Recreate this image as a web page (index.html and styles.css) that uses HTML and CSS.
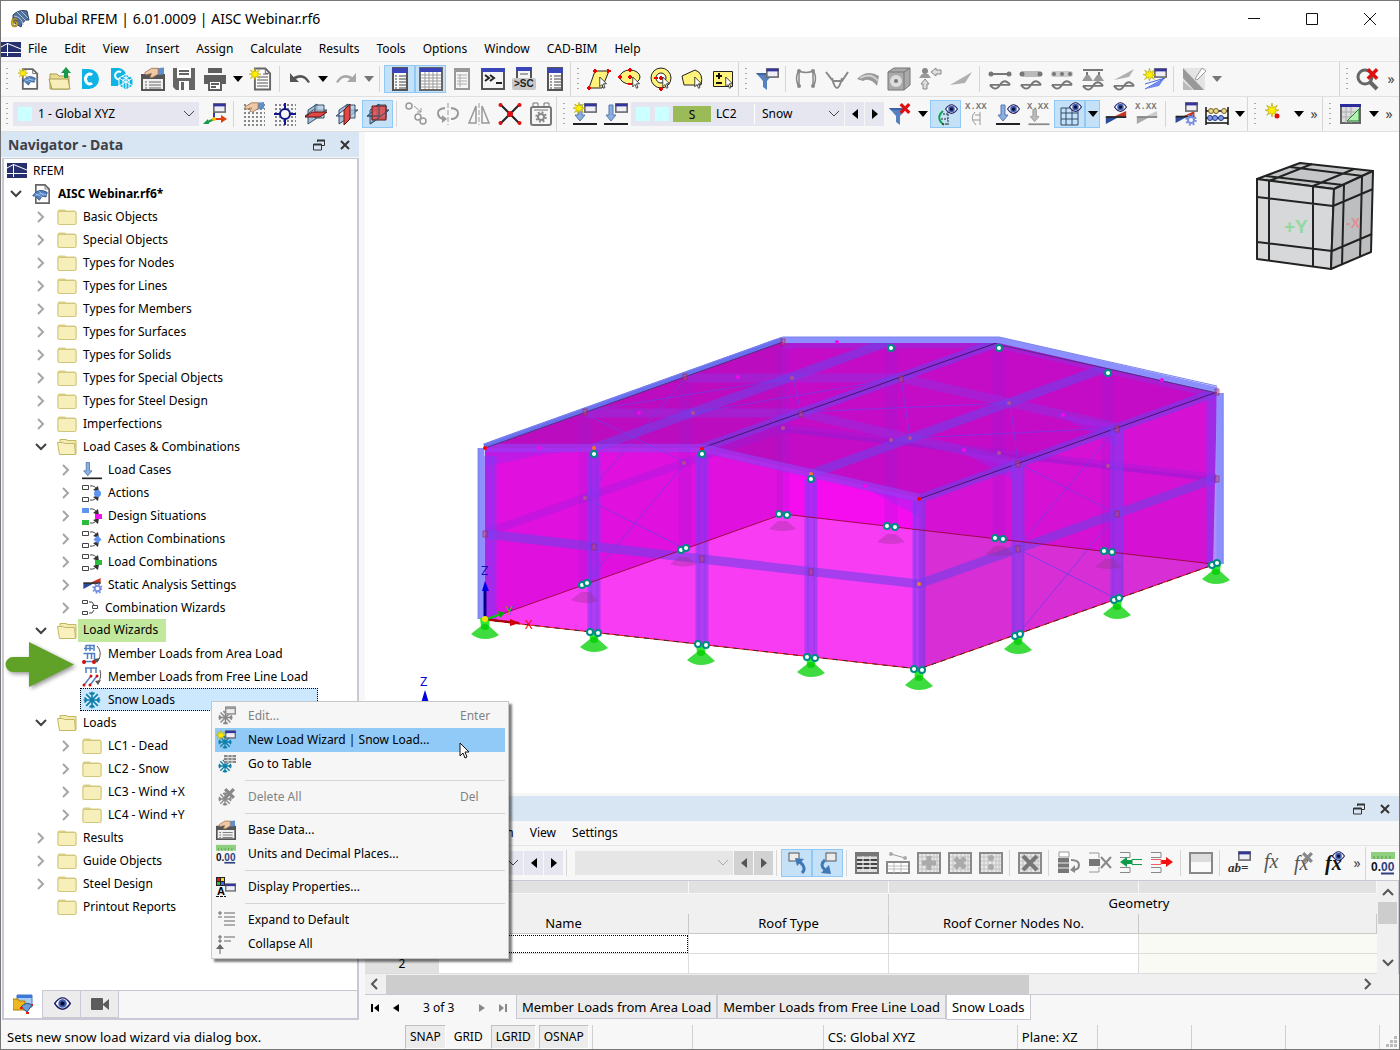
FILE: index.html
```html
<!DOCTYPE html>
<html lang="en">
<head>
<meta charset="utf-8">
<title>Dlubal RFEM | 6.01.0009 | AISC Webinar.rf6</title>
<link rel="stylesheet" href="styles.css">
</head>
<body>
<svg class="sprite" aria-hidden="true">
  <defs>
    <linearGradient id="g-grid" x1="0" y1="0" x2="1" y2="1"><stop offset="0" stop-color="#b8dcf4"/><stop offset="1" stop-color="#4a7194"/></linearGradient>
  </defs>
  <!-- shared motifs -->
  <symbol id="star" viewBox="0 0 24 24"><path d="M12 0l2 8 7-4-4 7 7 1-7 3 4 6-7-4-2 7-2-7-7 4 4-6-7-3 7-1-4-7 7 4z" fill="#ffee00" stroke="#a89a00"/></symbol>
  <symbol id="win" viewBox="0 0 24 18"><rect x="1.500" y="1.500" width="21" height="15" fill="#eeeef4" stroke="#6a6a70" stroke-width="3"/><rect x="1" y="1" width="22" height="5" fill="#34349c"/></symbol>
  <symbol id="win-g" viewBox="0 0 24 18"><rect x="1.500" y="1.500" width="21" height="15" fill="#eee" stroke="#8a8a8a" stroke-width="3"/><rect x="1" y="1" width="22" height="5" fill="#999"/></symbol>
  <symbol id="eye" viewBox="0 0 24 18"><path d="M1 9Q12-7 23 9 12 25 1 9z" fill="#fff" stroke="#1c1c60" stroke-width="2"/><circle cx="12" cy="9" r="6" fill="#3c5cae"/><circle cx="12" cy="9" r="3" fill="#0a0a30"/></symbol>
  <symbol id="flake" viewBox="0 0 24 24"><path d="M12 2v20M2 12h20M5 5l14 14M19 5L5 19M9 3l3 3 3-3M9 21l3-3 3 3M3 9l3 3-3 3M21 9l-3 3 3 3" fill="none" stroke="currentColor" stroke-width="2"/></symbol>
  <symbol id="gear" viewBox="0 0 24 24"><g fill="none" stroke="currentColor"><circle cx="12" cy="12" r="9.500" stroke-width="4" stroke-dasharray="3.730 3.730"/><circle cx="12" cy="12" r="6" stroke-width="4"/></g></symbol>
  <symbol id="cross" viewBox="0 0 24 24"><path d="M4 4l16 16M20 4L4 20" stroke="currentColor" stroke-width="6"/></symbol>
  <symbol id="cur" viewBox="0 0 12 18"><path d="M1 1v13l3-3 2 5 2-1-2-5h4z" fill="#fff" stroke="#111"/></symbol>
  <symbol id="chev-r" viewBox="0 0 12 12"><path d="M3 1l5 5-5 5" fill="none" stroke="#a6a6a6" stroke-width="2"/></symbol>
  <symbol id="chev-d" viewBox="0 0 12 12"><path d="M1 3l5 5 5-5" fill="none" stroke="#404040" stroke-width="2"/></symbol>
  <symbol id="chev-s" viewBox="0 0 12 12"><path d="M1 3l5 5 5-5" fill="none" stroke="currentColor"/></symbol>
  <symbol id="folder" viewBox="0 0 20 18"><path d="M.5 3.500q0-2 2-2h5l2 1h8q2 0 2 2v10.500q0 2-2 2h-15q-2 0-2-2z" fill="#d9cf85"/><rect x="1" y="3.500" width="18" height="13" rx="1.500" fill="#f7efb9" stroke="#d2c67c"/></symbol>
  <symbol id="folder-open" viewBox="0 0 20 18"><path d="M3 4V1.500h6l2 1h8V16" fill="#f3eab0" stroke="#c4b762"/><path d="M.5 4.500h5l2 1h10l1 11h-16z" fill="#f8f0bd" stroke="#c4b762"/></symbol>
  <symbol id="brand" viewBox="0 0 20 15"><rect width="20" height="15" fill="#27306e"/><path d="M0 10.500h20M6.500 1v13M0 5l6.500-3.500L20 7" fill="none" stroke="#fff" stroke-width="1"/></symbol>
  <symbol id="down-load" viewBox="0 0 24 24"><path d="M5 3h4v10h3l-5 6-5-6h3z" fill="#8aaee0" stroke="#5478b0"/><path d="M0 22h24" stroke="#222" stroke-width="2"/></symbol>
  <symbol id="down-load-g" viewBox="0 0 24 24"><path d="M5 5h4v8h3l-5 6-5-6h3z" fill="#bbb" stroke="#999"/><path d="M0 22h24" stroke="#888" stroke-width="2"/></symbol>
  <symbol id="grid-g" viewBox="0 0 24 24"><rect x="1" y="2" width="22" height="20" fill="#e8e8e8" stroke="#8a8a8a" stroke-width="2"/><path d="M2 6h20M2 10h20M2 14h20M2 18h20M5 3v18M9 3v18M13 3v18M17 3v18M20 3v18" stroke="#c2c2c2" fill="none"/></symbol>
  <symbol id="dots" viewBox="0 0 24 24"><path d="M2 3h21M2 7h21M2 11h21M2 15h21M2 19h21M2 23h21" stroke="#888" stroke-width="2" stroke-dasharray="2 2"/></symbol>
  <symbol id="planes" viewBox="0 0 24 24"><path d="M4 8l9-6v14l-9 6zM1 14h14l8-6H9z" fill="#8fb0d0" fill-opacity=".8" stroke="#37506a"/><path d="M11 3h9v13h-9z" fill="#a8c4dd" fill-opacity=".7" stroke="#37506a"/></symbol>
  <symbol id="comb" viewBox="0 0 20 20"><path d="M.5 2.500h6v4h-6zM.5 14.500h6v4h-6z" fill="#fff" stroke="#444"/><path d="M8 3q5-1 7 4M8 17q5 1 7-4" fill="none" stroke="#444"/><path d="M11 7l6 2-1-6zM11 14l6-2-1 6z" fill="#333"/></symbol>
  <symbol id="wedge" viewBox="0 0 24 14"><path d="M1 7v7l13-7z" fill="#2c4a9c"/><path d="M10 6L23 0v6z" fill="#c83420"/><path d="M1 6.500h22" stroke="#222" stroke-width="2"/></symbol>
  <symbol id="wedge-g" viewBox="0 0 24 14"><path d="M1 7v7l13-7z" fill="#aaa"/><path d="M10 6L23 0v6z" fill="#ccc"/><path d="M1 6.500h22" stroke="#888" stroke-width="2"/></symbol>
  <symbol id="hand" viewBox="0 0 24 12"><path d="M16 1l8-1v8l-7 1z" fill="#5e8fd0"/><path d="M1 6l8-5h8v7l-7 4H7l2-5-7 2z" fill="#eec9a4" stroke="#9a7150"/></symbol>
  <symbol id="basedata" viewBox="0 0 24 24"><rect x="1" y="8" width="22" height="15" fill="#f0f0f0" stroke="#555" stroke-width="2"/><path d="M1 7h22v5H1z" fill="#555"/><path d="M4 15h2M8 15h12M4 18h2M8 18h12M4 21h2M8 21h12" stroke="#666"/><use href="#hand" x="3" y="0" width="20" height="11"/></symbol>
  <symbol id="units" viewBox="0 0 24 24"><path d="M0 1h24v7H0z" fill="#8ed07e"/><path d="M3 5v3M7 5v3M11 5v3M15 5v3M19 5v3" stroke="#5a9a4c"/><text x="0" y="20" font-family="Liberation Sans" font-size="12" font-weight="700" fill="#111">0.<tspan fill="#2e4080">00</tspan></text><path d="M10 22.500h13" stroke="#2e4080" stroke-width="2"/></symbol>
  <symbol id="doc" viewBox="0 0 20 24"><path d="M2 1h11l5 5v17H2z" fill="#fdfdfd" stroke="#666" stroke-width="2"/><path d="M13 1v5h5" fill="none" stroke="#666"/></symbol>
  <symbol id="dome" viewBox="0 0 24 18"><path d="M1 10Q10-3 23 5l-2 7-6-1-4 6-5-5z" fill="#4f7fc0" stroke="#23426e"/><path d="M5 7l10 5M10 3l8 7M3 12q7-8 19-3" fill="none" stroke="#bcd6f2"/></symbol>
  <symbol id="funnel" viewBox="0 0 24 24"><path d="M1 6h18l-7 8v9l-4-3v-6z" fill="#5681be"/><path d="M1 6h18l-1.500 2H3z" fill="#3c64a0"/></symbol>
  <symbol id="restore" viewBox="0 0 12 12"><path d="M4.500 3V1.500h7v5H9" fill="none" stroke="#333"/><path d="M4 1.500h8M.5 5.500h8" stroke="#333" stroke-width="2"/><path d="M.5 5v6h8V5" fill="none" stroke="#333"/></symbol>
  <symbol id="close" viewBox="0 0 12 12"><path d="M2 2l8 8M10 2l-8 8" stroke="#333" stroke-width="2"/></symbol>
  <symbol id="listwin" viewBox="0 0 24 24"><rect x="5" y="1" width="14" height="22" fill="#fafafa" stroke="#555" stroke-width="2"/><path d="M4 1h16v5H4z" fill="#3a46b8"/><path d="M7 9h2M7 12h2M7 15h2M7 18h2M7 21h2M11 9h7M11 12h7M11 15h7M11 18h7M11 21h7" stroke="#444"/></symbol>
  <symbol id="wave" viewBox="0 0 24 12"><path d="M1 7h22M1 7q6 8 11 0t11 0" fill="none" stroke="#777" stroke-width="2"/></symbol>
</svg>

<header class="titlebar">
  <svg class="app-icon" viewBox="0 0 22 22"><path d="M4 7Q10 1 18 3l2 9q-6-1-8 7L4 14z" fill="#54719c" stroke="#2c4060"/><path d="M8 4l9 9M12 3l7 7M5 8q8 1 9 9" fill="none" stroke="#a9c2e0"/><text x="2" y="19" font-family="Liberation Sans" font-size="13" font-weight="700" fill="#f0c02c" stroke="#5d4a08" stroke-width=".5">6</text></svg>
  <h1>Dlubal RFEM | 6.01.0009 | AISC Webinar.rf6</h1>
  <div class="win-btns">
    <button type="button" aria-label="Minimize"><svg viewBox="0 0 14 14"><path d="M1 6.500h12" stroke="#111"/></svg></button>
    <button type="button" aria-label="Maximize"><svg viewBox="0 0 14 14"><path d="M1.500 1.500h11v11h-11z" fill="none" stroke="#111"/></svg></button>
    <button type="button" aria-label="Close"><svg viewBox="0 0 14 14"><path d="M1 1l12 12M13 1L1 13" stroke="#111"/></svg></button>
  </div>
</header>

<nav class="menubar" aria-label="Main menu">
  <svg class="brand"><use href="#brand"/></svg>
  <button type="button">File</button><button type="button">Edit</button><button type="button">View</button><button type="button">Insert</button><button type="button">Assign</button><button type="button">Calculate</button><button type="button">Results</button><button type="button">Tools</button><button type="button">Options</button><button type="button">Window</button><button type="button">CAD-BIM</button><button type="button">Help</button>
</nav>

<div class="toolbar" role="toolbar" aria-label="Standard">
  <i class="grip"></i>
  <button class="tb" type="button" aria-label="New"><svg viewBox="0 0 24 24"><use href="#doc" x="4" y="1" width="18" height="22"/><use href="#dome" x="5" y="8" width="14" height="11"/><use href="#star" x="1" y="1" width="10" height="10"/></svg></button>
  <button class="tb" type="button" aria-label="Open"><svg viewBox="0 0 24 24"><path d="M2 22V7h7l2 2h10v13z" fill="#e9dc95" stroke="#a89c50"/><path d="M1 12h19l2 10H4z" fill="#f8efb8" stroke="#a89c50"/><path d="M16 11V6h-3l5-6 5 6h-3v5z" fill="#159a4c"/></svg></button>
  <button class="tb" type="button" aria-label="Cloud"><svg viewBox="0 0 24 24"><path d="M3 2h7a10 10 0 0 1 0 20H3z" fill="#10b4e4"/><path d="M13 8a4 5 0 1 0 0 8" fill="none" stroke="#fff" stroke-width="3"/></svg></button>
  <button class="tb" type="button" aria-label="Cloud model"><svg viewBox="0 0 24 24"><path d="M1 1h8a9 9 0 0 1 7 6l-8 12H1z" fill="#10b4e4"/><path d="M11 5a4 4 0 1 0 0 7" fill="none" stroke="#fff" stroke-width="2"/><path d="M16 7l7 4v8l-7 4-7-4v-8z" fill="#10b4e4" stroke="#fff"/><path d="M16 7v8l7 4M9 11l7 4-7 4M16 15l7-4M16 15v8M12 9l7 4v8M20 9l-7 4v8" fill="none" stroke="#fff"/></svg></button>
  <button class="tb" type="button" aria-label="Base data"><svg><use href="#basedata"/></svg></button>
  <button class="tb" type="button" aria-label="Save"><svg viewBox="0 0 24 24"><path d="M1 1h22v22H4l-3-3z" fill="#666"/><path d="M5 1h14v10H5z" fill="#fff"/><path d="M7 4h10M7 7h10" stroke="#666" stroke-width="2"/><path d="M7 14h10v9H7z" fill="#fff"/><path d="M9 15h3v8H9z" fill="#666"/></svg></button>
  <button class="tb" type="button" aria-label="Print"><svg viewBox="0 0 24 24"><path d="M5 1h14v5H5zM1 8h22v9h-4v-4H5v4H1z" fill="#5e5e5e"/><path d="M6 14h12v9H6z" fill="#fff" stroke="#5e5e5e" stroke-width="2"/><path d="M8 17h8M8 20h5" stroke="#5e5e5e" stroke-width="2"/></svg></button>
  <button class="dd" type="button" aria-label="Print options"><svg viewBox="0 0 10 6"><path d="M0 0h10L5 6z"/></svg></button>
  <button class="tb" type="button" aria-label="New report"><svg viewBox="0 0 24 24"><use href="#doc" x="4" y="0" width="19" height="24"/><path d="M8 10h11M8 13h11M8 16h11M8 19h11M14 7h5" stroke="#555"/><use href="#star" x="0" y="1" width="12" height="12"/></svg></button>
  <i class="sep"></i>
  <button class="tb" type="button" aria-label="Undo"><svg viewBox="0 0 24 24"><path d="M2 6v9h9L8 12q7-4 12 4l2-1Q16 4 5.500 10z" fill="#555"/></svg></button>
  <button class="dd" type="button" aria-label="Undo list"><svg viewBox="0 0 10 6"><path d="M0 0h10L5 6z"/></svg></button>
  <button class="tb" type="button" aria-label="Redo"><svg viewBox="0 0 24 24"><path d="M22 6v9h-9l3-3q-7-4-12 4l-2-1Q8 4 18.500 10z" fill="#a8a8a8"/></svg></button>
  <button class="dd" type="button" aria-label="Redo list"><svg viewBox="0 0 10 6"><path d="M0 0h10L5 6z" fill="#777"/></svg></button>
  <i class="sep"></i>
  <button class="tb on" type="button" aria-label="Navigator"><svg><use href="#listwin"/></svg></button>
  <button class="tb on" type="button" aria-label="Tables"><svg viewBox="0 0 24 24"><rect x="1" y="1" width="22" height="22" fill="#fff" stroke="#666" stroke-width="2"/><path d="M1 1h22v4H1z" fill="#3a46b8"/><path d="M2 8h20M2 11h20M2 14h20M2 17h20M2 20h20M6 5v17M10 5v17M14 5v17M18 5v17" stroke="#999"/></svg></button>
  <button class="tb" type="button" aria-label="Sheet"><svg viewBox="0 0 24 24"><rect x="5" y="2" width="14" height="20" fill="#f6f6f6" stroke="#999" stroke-width="2"/><path d="M5 1h14v4H5z" fill="#999"/><path d="M7 8h10M7 11h10M7 14h10M7 17h10M10 7v13" stroke="#aaa"/></svg></button>
  <button class="tb" type="button" aria-label="Console"><svg viewBox="0 0 24 24"><rect x="1" y="2" width="22" height="20" fill="#f4f4f4" stroke="#555" stroke-width="2"/><path d="M0 1h24v4H0z" fill="#3a46b8"/><path d="M4 8l4 3-4 3M9 8l4 3-4 3M15 16h6" fill="none" stroke="#222" stroke-width="2"/></svg></button>
  <button class="tb" type="button" aria-label="Script"><svg viewBox="0 0 24 24"><path d="M5 1h14v11H5z" fill="#f4f4f4" stroke="#555" stroke-width="2"/><path d="M4 0h16v4H4z" fill="#3a46b8"/><path d="M8 7h8" stroke="#555"/><rect x="0" y="11" width="24" height="12" rx="2" fill="#c8c8c8"/><text x="2" y="20" font-family="Liberation Sans" font-size="10" font-weight="700" fill="#222">&gt;SC</text></svg></button>
  <button class="tb" type="button" aria-label="Panel"><svg><use href="#listwin"/></svg></button>
  <i class="sep-grip"></i>
  <button class="tb" type="button" aria-label="Select by rhomboid"><svg viewBox="0 0 24 24"><path d="M2 21l6-17h14l-7 17z" fill="#fff27a" stroke="#222"/><path d="M6 4h4M20 4h4M0 21h4M8 2v4M21 2v4M2 19v4" stroke="#e00" stroke-width="2"/><use href="#cur" x="12" y="9" width="9" height="14"/></svg></button>
  <button class="tb" type="button" aria-label="Select by ellipse"><svg viewBox="0 0 24 24"><ellipse cx="12" cy="10" rx="10" ry="7" fill="#fff27a" stroke="#222"/><path d="M0 10h4M10 10h4M10 3h4M12 1v4M12 8v4M2 8v4M10 17h4" stroke="#e00" stroke-width="2"/><use href="#cur" x="14" y="9" width="9" height="14"/></svg></button>
  <button class="tb" type="button" aria-label="Select by ring"><svg viewBox="0 0 24 24"><circle cx="12" cy="11" r="10" fill="#fff27a" stroke="#222"/><circle cx="12" cy="11" r="5" fill="#fff" stroke="#222"/><path d="M5 11h4M10 11h4M12 9v4M12 20v4M10 22h4" stroke="#e00" stroke-width="2"/><use href="#cur" x="13" y="9" width="9" height="14"/></svg></button>
  <button class="tb" type="button" aria-label="Select by polygon"><svg viewBox="0 0 24 24"><path d="M2 9L15 3q9 3 6 15L4 18z" fill="#fff27a" stroke="#222"/><use href="#cur" x="14" y="9" width="9" height="14"/></svg></button>
  <button class="tb" type="button" aria-label="Select plus minus"><svg viewBox="0 0 24 24"><path d="M2.500 4.500h19v15h-19z" fill="#fff27a" stroke="#222"/><path d="M5 9h6M8 6v6M5 16h6" stroke="#111" stroke-width="2"/><use href="#cur" x="14" y="9" width="9" height="14"/></svg></button>
  <i class="sep-grip"></i>
  <button class="tb" type="button" aria-label="Filter settings"><svg viewBox="0 0 24 24"><use href="#funnel"/><use href="#win" x="11" y="1" width="13" height="10"/></svg></button>
  <i class="sep"></i>
  <button class="tb" type="button" aria-label="Frame"><svg viewBox="0 0 24 24"><path d="M5 3v17M19 3v17M5 4q7 3 14 0M4 5q-3 6 0 13M20 5q3 6 0 13" fill="none" stroke="#888" stroke-width="1.500"/><g fill="#888"><circle cx="5" cy="4" r="2"/><circle cx="19" cy="4" r="2"/><circle cx="5" cy="19" r="2"/><circle cx="19" cy="19" r="2"/></g></svg></button>
  <button class="tb" type="button" aria-label="Moments"><svg viewBox="0 0 24 24"><path d="M1 5l7 9h9l6-9M7 11q5 20 10 0" fill="none" stroke="#888" stroke-width="2"/></svg></button>
  <button class="tb" type="button" aria-label="Surface results"><svg viewBox="0 0 24 24"><path d="M1 12Q11 2 23 9l-2 10Q14 10 7 14z" fill="#999"/><path d="M4 11q11-6 18 3" fill="none" stroke="#ccc" stroke-width="2"/></svg></button>
  <button class="tb" type="button" aria-label="Solid results"><svg viewBox="0 0 24 24"><path d="M1 5l6-4h16v17l-6 5H1z" fill="#aaa" stroke="#777"/><path d="M1 5h16v18M17 5l6-4" fill="none" stroke="#777"/><circle cx="9" cy="14" r="6" fill="#ddd"/><circle cx="9" cy="14" r="2" fill="#777"/></svg></button>
  <button class="tb" type="button" aria-label="Support reactions"><svg viewBox="0 0 24 24"><circle cx="7" cy="4" r="3" fill="#888"/><path d="M1 11l3-4h6l3 4z" fill="#999"/><path d="M5 22v-5H3l4-5 4 5H9v5zM23 3h-5V1l-5 4 5 4V7h5z" fill="#ddd" stroke="#888"/></svg></button>
  <button class="tb" type="button" aria-label="Contact"><svg viewBox="0 0 24 24"><path d="M1 18L23 5l-7 11z" fill="#b0b0b0"/></svg></button>
  <i class="sep"></i>
  <button class="tb" type="button" aria-label="Member"><svg viewBox="0 0 24 24"><path d="M2 7h20" stroke="#777" stroke-width="2"/><circle cx="3" cy="7" r="2.500" fill="#777"/><circle cx="21" cy="7" r="2.500" fill="#777"/><use href="#wave" x="1" y="11" width="22" height="12"/></svg></button>
  <button class="tb" type="button" aria-label="Member set"><svg viewBox="0 0 24 24"><rect x="2" y="4" width="20" height="6" rx="3" fill="#bbb"/><circle cx="3" cy="7" r="2.500" fill="#777"/><circle cx="21" cy="7" r="2.500" fill="#777"/><use href="#wave" x="1" y="11" width="22" height="12"/></svg></button>
  <button class="tb" type="button" aria-label="Member joints"><svg viewBox="0 0 24 24"><rect x="1" y="4" width="22" height="6" rx="3" fill="#ccc"/><g fill="#777"><circle cx="4" cy="7" r="2"/><circle cx="12" cy="7" r="2"/><circle cx="20" cy="7" r="2"/></g><use href="#wave" x="1" y="11" width="22" height="12"/></svg></button>
  <button class="tb" type="button" aria-label="Supports"><svg viewBox="0 0 24 24"><path d="M2 3h20M6 5v6M18 5v6" stroke="#777" stroke-width="2"/><path d="M1 14l4-6h3l4 6 4-6h3l4 6z" fill="#999"/><use href="#wave" x="1" y="12" width="22" height="12"/></svg></button>
  <button class="tb" type="button" aria-label="Line result"><svg viewBox="0 0 24 24"><path d="M2 13L22 2l-5 8z" fill="#b0b0b0"/><use href="#wave" x="1" y="12" width="22" height="12"/></svg></button>
  <button class="tb" type="button" aria-label="New result"><svg viewBox="0 0 24 24"><path d="M3 22l18-10-5 7z" fill="#6c88f4"/><path d="M2 17l20-6M2 22l20-11" stroke="#4664e0"/><use href="#win" x="11" y="1" width="13" height="10"/><use href="#star" x="0" y="1" width="13" height="13"/></svg></button>
  <i class="sep"></i>
  <button class="tb" type="button" aria-label="Edit result"><svg viewBox="0 0 24 24"><path d="M1 1h22v22H1z" fill="#e4e4e4"/><path d="M1 1l21 22H12L1 11z" fill="#999"/><path d="M1 23V14l10 9z" fill="#bbb"/><path d="M13 12L20 1l4 3-9 9z" fill="#fff" stroke="#999"/></svg></button>
  <button class="dd" type="button" aria-label="Result options"><svg viewBox="0 0 10 6"><path d="M0 0h10L5 6z" fill="#777"/></svg></button>
  <span class="grow"></span>
  <i class="sep-grip"></i>
  <button class="tb" type="button" aria-label="Cancel zoom"><svg viewBox="0 0 24 24" class="red"><circle cx="9" cy="10" r="7" fill="none" stroke="#666" stroke-width="3"/><path d="M14 15l7 7" stroke="#666" stroke-width="4"/><use href="#cross" x="9" y="0" width="15" height="14"/></svg></button>
  <button class="more" type="button">»</button>
</div>

<div class="toolbar" role="toolbar" aria-label="Load cases">
  <i class="grip"></i>
  <label class="combo combo-cs"><i class="swatch"></i><select aria-label="Coordinate system"><option>1 - Global XYZ</option></select><svg class="chev"><use href="#chev-s"/></svg></label>
  <button class="tb" type="button" aria-label="Edit axes"><svg viewBox="0 0 24 24"><path d="M11 17V3" stroke="#2c3ca8" stroke-width="2"/><path d="M11 17l-8 4" stroke="#159a4c" stroke-width="2"/><path d="M0 22l5-5 1 5z" fill="#159a4c"/><path d="M11 17h9" stroke="#e04010" stroke-width="2"/><path d="M18 13l6 4-6 4z" fill="#e04010"/><circle cx="11" cy="17" r="2" fill="#f6c000"/><use href="#win" x="10" y="1" width="13" height="10"/></svg></button>
  <i class="sep"></i>
  <button class="tb" type="button" aria-label="Grid settings"><svg viewBox="0 0 24 24"><use href="#dots"/><use href="#hand" x="2" y="0" width="20" height="10"/></svg></button>
  <button class="tb" type="button" aria-label="Snap"><svg viewBox="0 0 24 24"><use href="#dots"/><circle cx="12" cy="12" r="5" fill="#f7f7f7" stroke="#10188c" stroke-width="2"/><path d="M12 1v6M12 17v6M1 12h6M17 12h6" stroke="#10188c" stroke-width="2"/></svg></button>
  <button class="tb" type="button" aria-label="Plane XY"><svg viewBox="0 0 24 24"><use href="#planes"/><path d="M1 15l7-5h15l-7 5z" fill="#e04848" stroke="#601010"/></svg></button>
  <button class="tb" type="button" aria-label="Plane YZ"><svg viewBox="0 0 24 24"><use href="#planes"/><path d="M9 8l6-6v15l-6 6z" fill="#e04848" stroke="#601010"/></svg></button>
  <button class="tb on" type="button" aria-label="Plane XZ"><svg viewBox="0 0 24 24"><use href="#planes"/><path d="M6 4h14v14H6z" fill="#e04848" fill-opacity=".85" stroke="#601010"/><path d="M1 14h14l8-6M13 2v14l-9 6" fill="none" stroke="#37506a"/></svg></button>
  <i class="sep"></i>
  <button class="tb" type="button" aria-label="Copy"><svg viewBox="0 0 24 24"><g fill="none" stroke="#999" stroke-width="1.500"><circle cx="4" cy="4" r="3"/><circle cx="13" cy="15" r="3"/><circle cx="18" cy="19" r="3"/></g><path d="M9 4l7 6M16 6v4h-4" stroke="#999" fill="none"/></svg></button>
  <button class="tb" type="button" aria-label="Rotate"><svg viewBox="0 0 24 24"><path d="M12 1v22" stroke="#999" stroke-dasharray="5 2"/><path d="M9 6Q1 7 2 12t7 5M15 6q8 1 7 6t-7 5" fill="none" stroke="#999" stroke-width="2"/><path d="M6 13l5 4-5 4z" fill="#999"/></svg></button>
  <button class="tb" type="button" aria-label="Mirror"><svg viewBox="0 0 24 24"><path d="M12 1v22" stroke="#999" stroke-dasharray="5 2"/><path d="M9 4v17H2zM15 4v17h7z" fill="none" stroke="#999" stroke-width="1.500"/></svg></button>
  <button class="tb" type="button" aria-label="Divide"><svg viewBox="0 0 24 24"><path d="M2 2l20 20M22 2L2 22" stroke="#222" stroke-width="2"/><g fill="#e01010"><circle cx="2.500" cy="3" r="2"/><circle cx="21.500" cy="3" r="2"/><circle cx="2.500" cy="21" r="2"/><circle cx="21.500" cy="21" r="2"/><circle cx="12" cy="12" r="3"/></g></svg></button>
  <button class="tb" type="button" aria-label="Recorder"><svg viewBox="0 0 24 24" class="gray"><rect x="2" y="5" width="20" height="18" rx="2" fill="none" stroke="#777" stroke-width="2"/><path d="M4 4V1h5v3M15 4V1h5v3M5 8h14" fill="none" stroke="#777"/><use href="#gear" x="6" y="9" width="12" height="12"/></svg></button>
  <i class="sep-grip"></i>
  <button class="tb" type="button" aria-label="New load case"><svg viewBox="0 0 24 24"><use href="#down-load"/><use href="#win" x="11" y="1" width="13" height="10"/><use href="#star" x="0" y="0" width="12" height="12"/></svg></button>
  <button class="tb" type="button" aria-label="Edit load case"><svg viewBox="0 0 24 24"><use href="#down-load"/><use href="#win" x="11" y="1" width="13" height="10"/></svg></button>
  <label class="combo combo-lc"><i class="swatch"></i><i class="swatch"></i><span class="tag">S</span><span class="lc">LC2</span><select aria-label="Load case"><option>Snow</option></select><svg class="chev"><use href="#chev-s"/></svg></label>
  <button class="step" type="button" aria-label="Previous"><svg viewBox="0 0 6 10"><path d="M6 0v10L0 5z"/></svg></button>
  <button class="step" type="button" aria-label="Next"><svg viewBox="0 0 6 10"><path d="M0 0v10l6-5z"/></svg></button>
  <button class="tb" type="button" aria-label="Clear filter"><svg viewBox="0 0 24 24" class="red"><use href="#funnel"/><use href="#cross" x="10" y="0" width="14" height="13"/></svg></button>
  <button class="dd" type="button" aria-label="Filter list"><svg viewBox="0 0 10 6"><path d="M0 0h10L5 6z"/></svg></button>
  <button class="tb on" type="button" aria-label="Show results"><svg viewBox="0 0 24 24"><path d="M9 9q-8 7 1 14" fill="none" stroke="#10a050" stroke-width="2"/><path d="M14 9v14M9 12h5M7 17h7M8 22h6" stroke="#222" stroke-dasharray="2 1"/><use href="#eye" x="11" y="2" width="13" height="10"/></svg></button>
  <button class="tb" type="button" aria-label="Show values"><svg viewBox="0 0 24 24"><text class="vals" x="0" y="7">X.XX</text><path d="M10 10q-6 6 1 13M15 10v13M10 13h5M8 18h7" fill="none" stroke="#999"/></svg></button>
  <button class="tb" type="button" aria-label="Show loads"><svg viewBox="0 0 24 24"><use href="#down-load"/><use href="#eye" x="11" y="2" width="13" height="10"/></svg></button>
  <button class="tb" type="button" aria-label="Load values"><svg viewBox="0 0 24 24"><use href="#down-load-g" y="3" height="21"/><text class="vals" x="0" y="7">X.XX</text></svg></button>
  <button class="tb on" type="button" aria-label="Show mesh"><svg viewBox="0 0 24 24"><path d="M3 6h17v17H3z" fill="url(#g-grid)" stroke="#2e4a68"/><path d="M3 11h17M3 17h17M8 6v17M14 6v17" stroke="#2e4a68"/><use href="#eye" x="11" y="0" width="13" height="10"/></svg></button>
  <button class="dd on" type="button" aria-label="Mesh options"><svg viewBox="0 0 10 6"><path d="M0 0h10L5 6z"/></svg></button>
  <button class="tb" type="button" aria-label="Show diagram"><svg viewBox="0 0 24 24"><use href="#wedge" x="0" y="9" width="24" height="13"/><use href="#eye" x="10" y="0" width="13" height="10"/></svg></button>
  <button class="tb" type="button" aria-label="Diagram values"><svg viewBox="0 0 24 24"><use href="#wedge-g" x="0" y="9" width="24" height="13"/><text class="vals" x="0" y="7">X.XX</text></svg></button>
  <i class="sep"></i>
  <button class="tb" type="button" aria-label="Analysis settings"><svg viewBox="0 0 24 24" class="lilac"><use href="#wedge" x="0" y="9" width="22" height="12"/><use href="#win" x="11" y="0" width="13" height="10"/><use href="#gear" x="11" y="12" width="12" height="12"/></svg></button>
  <button class="tb" type="button" aria-label="Calculate"><svg viewBox="0 0 24 24"><path d="M1 5v18M23 5v18M1 9h22M1 16h22M1 21h22" stroke="#111" stroke-width="1.500"/><g fill="#e8d890" stroke="#776020"><circle cx="6" cy="9" r="2.500"/><circle cx="11" cy="9" r="2.500"/><circle cx="19" cy="9" r="2.500"/></g><g fill="#7e9ae8" stroke="#203a90"><circle cx="5" cy="16" r="2.500"/><circle cx="10" cy="16" r="2.500"/><circle cx="16" cy="16" r="2.500"/></g></svg></button>
  <button class="dd" type="button" aria-label="Calculate list"><svg viewBox="0 0 10 6"><path d="M0 0h10L5 6z"/></svg></button>
  <i class="sep-grip"></i>
  <button class="tb" type="button" aria-label="New node"><svg viewBox="0 0 24 24"><use href="#star" x="1" y="1" width="14" height="14"/><circle cx="13" cy="14" r="2.500" fill="#e01010"/></svg></button>
  <button class="dd" type="button" aria-label="Node list"><svg viewBox="0 0 10 6"><path d="M0 0h10L5 6z"/></svg></button>
  <button class="more" type="button">»</button>
  <i class="sep-grip"></i>
  <button class="tb" type="button" aria-label="Workspace"><svg viewBox="0 0 24 24"><rect x="2" y="3" width="19" height="18" fill="#ddd" stroke="#666" stroke-width="2"/><path d="M1 2h21v3H1z" fill="#2c2c9c"/><path d="M7 5v16M12 5v16M3 10h17M3 15h17" stroke="#aaa"/><path d="M8 19L20 7v12z" fill="#b4f0b0" stroke="#208030"/></svg></button>
  <button class="dd" type="button" aria-label="Workspace list"><svg viewBox="0 0 10 6"><path d="M0 0h10L5 6z"/></svg></button>
  <button class="more" type="button">»</button>
</div>

<main class="work">
  <aside class="nav">
    <header class="dock-head"><h2>Navigator - Data</h2><button type="button" aria-label="Float"><svg><use href="#restore"/></svg></button><button type="button" aria-label="Close"><svg><use href="#close"/></svg></button></header>
    <div class="tree-box">
      <ul class="tree">
        <li class="l0 root"><svg class="ic"><use href="#brand"/></svg>RFEM</li>
        <li class="l0 file"><svg class="tw"><use href="#chev-d"/></svg><svg class="ic" viewBox="0 0 20 20"><use href="#doc" x="2" y="0" width="17" height="20"/><use href="#dome" x="0" y="5" width="16" height="12"/></svg>AISC Webinar.rf6*</li>
        <li class="l1"><svg class="tw"><use href="#chev-r"/></svg><svg class="ic"><use href="#folder"/></svg>Basic Objects</li>
        <li class="l1"><svg class="tw"><use href="#chev-r"/></svg><svg class="ic"><use href="#folder"/></svg>Special Objects</li>
        <li class="l1"><svg class="tw"><use href="#chev-r"/></svg><svg class="ic"><use href="#folder"/></svg>Types for Nodes</li>
        <li class="l1"><svg class="tw"><use href="#chev-r"/></svg><svg class="ic"><use href="#folder"/></svg>Types for Lines</li>
        <li class="l1"><svg class="tw"><use href="#chev-r"/></svg><svg class="ic"><use href="#folder"/></svg>Types for Members</li>
        <li class="l1"><svg class="tw"><use href="#chev-r"/></svg><svg class="ic"><use href="#folder"/></svg>Types for Surfaces</li>
        <li class="l1"><svg class="tw"><use href="#chev-r"/></svg><svg class="ic"><use href="#folder"/></svg>Types for Solids</li>
        <li class="l1"><svg class="tw"><use href="#chev-r"/></svg><svg class="ic"><use href="#folder"/></svg>Types for Special Objects</li>
        <li class="l1"><svg class="tw"><use href="#chev-r"/></svg><svg class="ic"><use href="#folder"/></svg>Types for Steel Design</li>
        <li class="l1"><svg class="tw"><use href="#chev-r"/></svg><svg class="ic"><use href="#folder"/></svg>Imperfections</li>
        <li class="l1"><svg class="tw"><use href="#chev-d"/></svg><svg class="ic"><use href="#folder-open"/></svg>Load Cases &amp; Combinations</li>
        <li class="l2"><svg class="tw"><use href="#chev-r"/></svg><svg class="ic"><use href="#down-load"/></svg>Load Cases</li>
        <li class="l2"><svg class="tw"><use href="#chev-r"/></svg><svg class="ic" viewBox="0 0 20 20"><use href="#comb"/><circle cx="15.500" cy="10.500" r="3.500" fill="#5e94f4"/></svg>Actions</li>
        <li class="l2"><svg class="tw"><use href="#chev-r"/></svg><svg class="ic" viewBox="0 0 20 20"><use href="#comb"/><path d="M0 2h7v5H0z" fill="#5e94f4"/><path d="M0 14h7v5H0z" fill="#2cbc3c"/><path d="M13 8h7v5h-7z" fill="#f010f0"/></svg>Design Situations</li>
        <li class="l2"><svg class="tw"><use href="#chev-r"/></svg><svg class="ic" viewBox="0 0 20 20"><use href="#comb"/><path d="M15.500 6.500l4 4-4 4-4-4z" fill="#5e94f4"/></svg>Action Combinations</li>
        <li class="l2"><svg class="tw"><use href="#chev-r"/></svg><svg class="ic" viewBox="0 0 20 20"><use href="#comb"/><path d="M13 8h7v5h-7z" fill="#2cbc3c"/></svg>Load Combinations</li>
        <li class="l2"><svg class="tw"><use href="#chev-r"/></svg><svg class="ic lilac" viewBox="0 0 20 20"><use href="#wedge" x="0" y="3" width="20" height="11"/><use href="#gear" x="10" y="8" width="11" height="11"/></svg>Static Analysis Settings</li>
        <li class="l2 narrow"><svg class="tw"><use href="#chev-r"/></svg><svg class="ic" viewBox="0 0 17 20"><path d="M.5 2.500h5v3h-5zM.5 13.500h5v3h-5zM10.500 7.500h5v3h-5z" fill="#fff" stroke="#444"/><path d="M7 4h3l2 3M7 15h3l2-3" fill="none" stroke="#444"/></svg>Combination Wizards</li>
        <li class="l1"><svg class="tw"><use href="#chev-d"/></svg><svg class="ic"><use href="#folder-open"/></svg><mark>Load Wizards</mark></li>
        <li class="l2 leaf"><svg class="ic" viewBox="0 0 20 20"><path d="M4 1.500h9M2 4.500h9M4 1v6M8 1v6M12 1v6M1.500 9.500h11v8h-11M5.500 9v6M9.500 9v6" fill="none" stroke="#5080c0" stroke-width="1.500"/><path d="M15 2q6 6 1 15" fill="none" stroke="#555"/><path d="M12 15l6-1-3 5z" fill="#555"/><circle cx="2" cy="18" r="2" fill="#d01010"/><circle cx="12" cy="18" r="2" fill="#d01010"/></svg>Member Loads from Area Load</li>
        <li class="l2 leaf"><svg class="ic" viewBox="0 0 20 20"><path d="M3 1h12M4 1v5M9 1v5M14 1v5M2 18l7-9M8 18l7-9" fill="none" stroke="#5080c0" stroke-width="1.500"/><path d="M18 3q2 8-2 12" fill="none" stroke="#555"/><path d="M13 14l6-1-3 5z" fill="#555"/><g fill="#d01010"><circle cx="2" cy="18" r="1.500"/><circle cx="8" cy="18" r="1.500"/><circle cx="9" cy="9" r="1.500"/><circle cx="15" cy="9" r="1.500"/></g></svg>Member Loads from Free Line Load</li>
        <li class="l2 leaf selected"><svg class="ic snow"><use href="#flake"/></svg>Snow Loads</li>
        <li class="l1"><svg class="tw"><use href="#chev-d"/></svg><svg class="ic"><use href="#folder-open"/></svg>Loads</li>
        <li class="l2"><svg class="tw"><use href="#chev-r"/></svg><svg class="ic"><use href="#folder"/></svg>LC1 - Dead</li>
        <li class="l2"><svg class="tw"><use href="#chev-r"/></svg><svg class="ic"><use href="#folder"/></svg>LC2 - Snow</li>
        <li class="l2"><svg class="tw"><use href="#chev-r"/></svg><svg class="ic"><use href="#folder"/></svg>LC3 - Wind +X</li>
        <li class="l2"><svg class="tw"><use href="#chev-r"/></svg><svg class="ic"><use href="#folder"/></svg>LC4 - Wind +Y</li>
        <li class="l1"><svg class="tw"><use href="#chev-r"/></svg><svg class="ic"><use href="#folder"/></svg>Results</li>
        <li class="l1"><svg class="tw"><use href="#chev-r"/></svg><svg class="ic"><use href="#folder"/></svg>Guide Objects</li>
        <li class="l1"><svg class="tw"><use href="#chev-r"/></svg><svg class="ic"><use href="#folder"/></svg>Steel Design</li>
        <li class="l1 leaf"><svg class="ic"><use href="#folder"/></svg>Printout Reports</li>
      </ul>
      <div class="nav-tabs">
        <button class="active" type="button" aria-label="Data"><svg viewBox="0 0 20 20"><path d="M4 1h15v12H4z" fill="#a8ccf4" stroke="#4878c8"/><path d="M4 1h15v3H4z" fill="#3c78d8"/><path d="M0 5h5l1 2h6v9H0z" fill="#f0b820" stroke="#b08000"/><path d="M8 13q5-6 11-2l-5 7z" fill="#6aa0d8" stroke="#285080"/><path d="M7 14h3M13 19h3M18 11h2" stroke="#e02020" stroke-width="2"/></svg></button>
        <button type="button" aria-label="Display"><svg viewBox="0 0 20 20"><use href="#eye" x="2" y="3" width="17" height="13"/></svg></button>
        <button type="button" aria-label="Views"><svg viewBox="0 0 20 20"><rect x="1" y="4" width="12" height="12" rx="1" fill="#5c5c5c"/><path d="M13 10l6-5v11l-6-5z" fill="#5c5c5c"/></svg></button>
      </div>
    </div>
    <svg class="pointer" viewBox="0 0 78 52"><path d="M10 18h16V3l45 22.500L26 48V33H10a7.500 7.500 0 0 1 0-15z" fill="#60a228"/></svg>
    <div class="ctx" role="menu">
      <button class="off" type="button" role="menuitem"><svg viewBox="0 0 20 20" class="gray"><use href="#flake" x="1" y="3" width="17" height="17"/><use href="#win-g" x="9" y="0" width="11" height="9"/></svg><span>Edit...</span><kbd>Enter</kbd></button>
      <button class="hot" type="button" role="menuitem"><svg viewBox="0 0 20 20" class="snow"><use href="#flake" x="1" y="4" width="16" height="16"/><use href="#win" x="9" y="0" width="11" height="9"/><use href="#star" x="0" y="0" width="10" height="10"/></svg><span>New Load Wizard | Snow Load...</span></button>
      <button type="button" role="menuitem"><svg viewBox="0 0 20 20" class="snow"><use href="#flake" x="1" y="4" width="16" height="16"/><path d="M8 1h12v8H8z" fill="#888"/><path d="M8 3.500h12M8 6.500h12M12 1v8M16 1v8" stroke="#ddd"/></svg><span>Go to Table</span></button>
      <hr>
      <button class="off" type="button" role="menuitem"><svg viewBox="0 0 20 20" class="gray"><use href="#flake" x="1" y="4" width="16" height="16"/><use href="#cross" x="7" y="0" width="13" height="13"/></svg><span>Delete All</span><kbd>Del</kbd></button>
      <hr>
      <button type="button" role="menuitem"><svg><use href="#basedata"/></svg><span>Base Data...</span></button>
      <button type="button" role="menuitem"><svg><use href="#units"/></svg><span>Units and Decimal Places...</span></button>
      <hr>
      <button type="button" role="menuitem"><svg viewBox="0 0 20 20"><path d="M0 0h9v9H0z" fill="#222"/><path d="M1 1h3v3H1z" fill="#f01010"/><path d="M5 1h3v3H5z" fill="#f0e020"/><path d="M1 5h3v3H1z" fill="#20c030"/><path d="M5 5h3v3H5z" fill="#4060f0"/><text x="1" y="18" font-family="Liberation Sans" font-size="11" font-weight="700">A</text><path d="M0 19.500h10" stroke="#111" stroke-dasharray="3 1"/><use href="#win" x="9" y="6" width="11" height="9"/></svg><span>Display Properties...</span></button>
      <hr>
      <button type="button" role="menuitem"><svg viewBox="0 0 20 20"><path d="M2 3h4M4 1v4M2 7h4M8 3h11M8 7h11M8 11h11M8 15h11" stroke="#666" fill="none"/></svg><span>Expand to Default</span></button>
      <button type="button" role="menuitem"><svg viewBox="0 0 20 20"><path d="M2 3h4M4 1v4M2 7h4M4 5v4M8 3h11M8 7h7M4 13v7" stroke="#666" fill="none"/><path d="M0 15l4-5 4 5z" fill="#666"/></svg><span>Collapse All</span></button>
      <svg class="mouse"><use href="#cur"/></svg>
    </div>
  </aside>

  <section class="stage">
    <svg class="scene" viewBox="365 131 1034 661" preserveAspectRatio="xMidYMid slice">
      <defs>
        <symbol id="sup" viewBox="0 0 28 24" overflow="visible"><path d="M0 17L10 9h8l10 9q-6 4-14 4T0 17z" fill="#3edc3e"/><path d="M9 1h10l-1 9q-4 4-8 0z" fill="#30e830"/><ellipse cx="14" cy="10" rx="4" ry="3" fill="#10d010"/></symbol>
        <g id="hinge"><circle r="3" fill="#fff" stroke="#008c84" stroke-width="2"/></g>
        <g id="hinge2"><use href="#hinge" x="-4"/><use href="#hinge" x="4" y="1"/></g>
        <g id="hinge3"><use href="#hinge" x="-3" y="1"/><use href="#hinge" x="2" y="-1"/></g>
        <g id="joint"><rect x="-2" y="-3" width="4" height="6" fill="#c05070" fill-opacity=".4" stroke="#a02050" stroke-width=".6"/></g>
      </defs>
      <!-- envelope -->
      <path d="M485 619V447L783 340H999L1217 390 1213 564 919 668z" fill="#f50df0"/>
      <path d="M485 447L783 340V513L485 619z" fill="#e010de"/>
      <path d="M485 619L783 513 1213 563 919 668z" fill="#f83cf4"/>
      <path d="M919 497L1217 390 1213 564 919 668z" fill="#a018a4" fill-opacity=".38"/>
      <path d="M485 447L783 340H999L1217 390 919 497 702 447z" fill="#a00ca8" fill-opacity=".58"/>
      <path d="M783 427L1217 477 1213 480 783 431z" fill="#9018c0" fill-opacity=".3"/>
      <!-- hidden frames -->
      <g fill="none" stroke="#8b20d8" stroke-opacity=".2" stroke-width="13"><path d="M783 345V513M891 345V524M999 350V537M1108 372V550M585 413V583M685 378V548"/></g>
      <g fill="none" stroke="#8c20e0" stroke-opacity=".3" stroke-width="8"><path d="M485 532L783 427 1217 477"/></g>
      <g fill="none" stroke="#9030e0" stroke-opacity=".5" stroke-width="9"><path d="M485 447H702L919 497M585 412H801L1018 462M685 377H901L1117 426"/><path d="M783 343H999L1217 393"/></g>
      <g fill="#9a28f0" fill-opacity=".45"><path d="M485 447H594L540 454 487 465zM919 497L811 473 865 487 919 516zM1018 461L955 447 1018 482zM1117 424L1054 412 1117 445z"/></g>
      <!-- bracing -->
      <g stroke="#6d3ce8" stroke-opacity=".75" fill="none"><path d="M693 412L901 377M585 410L793 377M801 412L793 377M910 437L901 377M910 437L1117 427M1018 462L1010 402M801 411L1010 402M1018 462L1117 513M1117 427L1018 546M1018 548L1117 598M1117 513L1018 633M585 413L685 461M685 378L585 496M585 497L685 548M685 462L585 583"/></g>
      <!-- purlins and girts -->
      <g fill="none" stroke="#7040e8" stroke-opacity=".6" stroke-width="9"><path d="M594 447L891 340M702 447L999 341M811 473L1108 366"/><path d="M485 533L919 583 1217 477"/><path d="M919 498L1217 391"/></g>
      <path d="M702 447L999 341M919 498L1217 391" stroke="#3a1a70" fill="none"/>
      <!-- front columns -->
      <g fill="none" stroke="#7c3cf4" stroke-opacity=".58" stroke-width="13"><path d="M594 453V630M702 453V643M811 478V657M919 500V669M1018 463V633M1117 428V598M490 455V619M1213 395V564" /></g>
      <g fill="none" stroke="#7038e0" stroke-opacity=".5"><path d="M591 453V630M597 453V630M699 453V643M705 453V643M808 478V657M814 478V657M915 500V669M924 500V669M1014 463V633M1023 463V633M1113 428V598M1122 428V598"/></g>
      <path d="M702 447L919 497M485 447H702" stroke="#a43cf8" stroke-opacity=".5" stroke-width="8" fill="none"/>
      <!-- outer members -->
      <g fill="none" stroke="#8c90ff" stroke-width="6"><path d="M484 445L783 338" stroke="#6870f0" stroke-width="5"/><path d="M783 339H999L1217 389"/><path d="M481 447V618M1220 392V563" stroke-width="7"/></g>
      <path d="M479 447V618M1223 392V563M485 443L783 336H999L1217 385" stroke="#7c84e8" fill="none"/>
      <path d="M485 447L783 341M1000 344L1217 392" stroke="#503080" fill="none"/>
      <!-- ground edges -->
      <path d="M485 619L783 513 1213 563" fill="none" stroke="#a00848"/>
      <path d="M485 619L919 668 1213 564" fill="none" stroke="#f01010"/><path d="M485 619L919 668 1213 564" fill="none" stroke="#303030" stroke-dasharray="5 5"/>
      <!-- joints -->
      <g><use href="#joint" x="485" y="533"/><use href="#joint" x="594" y="546"/><use href="#joint" x="702" y="558"/><use href="#joint" x="811" y="571"/><use href="#joint" x="1018" y="548"/><use href="#joint" x="1117" y="513"/><use href="#joint" x="1217" y="478"/><use href="#joint" x="585" y="411"/><use href="#joint" x="685" y="376"/><use href="#joint" x="783" y="341"/><use href="#joint" x="801" y="413"/><use href="#joint" x="901" y="378"/><use href="#joint" x="1018" y="463"/><use href="#joint" x="1117" y="428"/><use href="#joint" x="1217" y="391"/></g>
      <g fill="#b05090"><circle cx="585" cy="497" r="2"/><circle cx="684" cy="462" r="2"/><circle cx="783" cy="427" r="2"/><circle cx="693" cy="412" r="2"/><circle cx="792" cy="377" r="2"/><circle cx="891" cy="439" r="2"/><circle cx="910" cy="437" r="2"/><circle cx="999" cy="452" r="2"/><circle cx="1009" cy="402" r="2"/><circle cx="1108" cy="465" r="2"/></g>
      <g fill="#f804f0"><circle cx="540" cy="447" r="2"/><circle cx="639" cy="412" r="2"/><circle cx="738" cy="376" r="2"/><circle cx="837" cy="341" r="2"/><circle cx="865" cy="485" r="2"/><circle cx="964" cy="449" r="2"/><circle cx="1063" cy="414" r="2"/><circle cx="1162" cy="379" r="2"/></g>
      <g fill="#f00"><circle cx="485" cy="447" r="2"/><circle cx="702" cy="448" r="2"/><circle cx="919" cy="498" r="2"/></g>
      <g fill="#f47a20"><circle cx="594" cy="447" r="2"/><circle cx="811" cy="473" r="2"/><circle cx="919" cy="583" r="2"/></g>
      <!-- supports -->
      <path d="M571 599l10-8h9l8 9q-13 5-27-1zM670 563l9-7h9l9 7q-13 5-27 0zM769 528l9-8h9l9 8q-13 4-27 0zM877 541l10-8h9l9 8q-14 4-28 0zM985 553l10-8h9l9 8q-14 4-28 0zM1095 566l10-8h9l8 8q-13 4-27 0z" fill="#903090" opacity=".35"/>
      <use href="#sup" x="471" y="616" width="28" height="24"/><use href="#sup" x="580" y="629" width="28" height="24"/><use href="#sup" x="687" y="642" width="28" height="24"/><use href="#sup" x="797" y="654" width="28" height="24"/><use href="#sup" x="905" y="667" width="28" height="24"/><use href="#sup" x="1004" y="631" width="28" height="24"/><use href="#sup" x="1103" y="596" width="28" height="24"/><use href="#sup" x="1202" y="561" width="28" height="24"/>
      <use href="#hinge2" x="594" y="631"/><use href="#hinge2" x="702" y="643"/><use href="#hinge2" x="811" y="656"/><use href="#hinge2" x="918" y="668"/><use href="#hinge3" x="1018" y="634"/><use href="#hinge3" x="1117" y="598"/><use href="#hinge3" x="1215" y="563"/><use href="#hinge3" x="585" y="583"/><use href="#hinge3" x="684" y="548"/><use href="#hinge2" x="783" y="513"/><use href="#hinge2" x="891" y="525"/><use href="#hinge2" x="999" y="537"/><use href="#hinge2" x="1108" y="550"/>
      <use href="#hinge" x="594" y="453"/><use href="#hinge" x="702" y="453"/><use href="#hinge" x="811" y="478"/><use href="#hinge" x="891" y="347"/><use href="#hinge" x="999" y="347"/><use href="#hinge" x="1108" y="372"/>
      <!-- axes -->
      <path d="M485 618V588" stroke="#00008c" stroke-width="3"/><path d="M482 590l3-10 4 10z" fill="#0000e0"/>
      <path d="M485 618l34 4" stroke="#a00" stroke-width="2"/><path d="M510 618l10 4-10 3z" fill="#c00"/>
      <path d="M487 618l17-6" stroke="#0c0" stroke-width="2"/><path d="M498 610l7 2-5 5z" fill="#0a0"/><circle cx="485" cy="618" r="3" fill="#ffe000"/>
      <g font-family="Noto Sans" font-size="13"><text x="481" y="574" fill="#1010c0">Z</text><text x="506" y="614" fill="#0c0" font-size="12">Y</text><text x="525" y="628" fill="#f00">X</text><text x="420" y="685" fill="#0000e0">Z</text></g>
      <path d="M421 702l4-13 4 13z" fill="#0000e0"/>
      <!-- view cube -->
      <g stroke="#222" stroke-width="2" stroke-linejoin="round">
        <path d="M1257 178L1300 162 1373 170 1334 188z" fill="#c4c6c8"/><path d="M1257 178L1334 188 1331 268 1257 258z" fill="#d6d8d9"/><path d="M1334 188L1373 170 1371 251 1331 268z" fill="#bcbec0"/>
        <path d="M1269 180V260M1313 185V266M1257 196L1333 205M1257 241L1332 250M1344 184L1342 264M1362 176L1360 256M1333 205L1373 188M1332 250L1372 233M1269 180L1312 163M1313 185L1354 168M1266 175L1343 184M1290 166L1363 175" fill="none"/>
      </g>
      <g font-family="Liberation Sans" font-weight="700"><text x="1284" y="232" fill="#92d8a0" font-size="19">+Y</text><text x="1346" y="227" fill="#e09090" font-size="14">-X</text></g>
    </svg>

    <section class="dock">
      <header class="dock-head"><span class="grow"></span><button type="button" aria-label="Float"><svg><use href="#restore"/></svg></button><button type="button" aria-label="Close"><svg><use href="#close"/></svg></button></header>
      <nav class="menubar table-menu" aria-label="Table menu"><button type="button">Go To</button><button type="button">Edit</button><button type="button">Selection</button><button type="button">View</button><button type="button">Settings</button></nav>
      <div class="toolbar table-tools" role="toolbar" aria-label="Table">
        <i class="grip"></i>
        <label class="combo combo-a"><select aria-label="Table group"><option>Load Wizards</option></select><svg class="chev"><use href="#chev-s"/></svg></label>
        <button class="step" type="button" aria-label="Previous"><svg viewBox="0 0 6 10"><path d="M6 0v10L0 5z"/></svg></button>
        <button class="step" type="button" aria-label="Next"><svg viewBox="0 0 6 10"><path d="M0 0v10l6-5z"/></svg></button>
        <i class="sep-plain"></i>
        <label class="combo combo-b"><select aria-label="Object" disabled><option></option></select><svg class="chev"><use href="#chev-s"/></svg></label>
        <button class="step dim" type="button" aria-label="Previous object"><svg viewBox="0 0 6 10"><path d="M6 0v10L0 5z"/></svg></button>
        <button class="step dim" type="button" aria-label="Next object"><svg viewBox="0 0 6 10"><path d="M0 0v10l6-5z"/></svg></button>
        <i class="sep"></i>
        <button class="tb on" type="button" aria-label="Pick in model"><svg viewBox="0 0 24 24"><rect x="4" y="2" width="10" height="8" fill="#ececec" stroke="#555"/><path d="M17 22q5-5-2-11" fill="none" stroke="#4078b4" stroke-width="3"/><path d="M10 7l9 1-7 7z" fill="#4078b4"/></svg></button>
        <button class="tb on" type="button" aria-label="Pick in table"><svg viewBox="0 0 24 24"><rect x="10" y="2" width="10" height="8" fill="#ececec" stroke="#555"/><path d="M9 9q-6 5 0 10" fill="none" stroke="#4078b4" stroke-width="3"/><path d="M5 22l10 1-2-9z" fill="#4078b4"/></svg></button>
        <i class="sep"></i>
        <button class="tb" type="button" aria-label="Rows"><svg viewBox="0 0 24 24"><rect x="1" y="2" width="22" height="20" fill="#ddd" stroke="#777" stroke-width="2"/><path d="M1 4h22" stroke="#777" stroke-width="3"/><path d="M2 9h20M2 13h20M2 17h20" stroke="#444" stroke-width="2"/><path d="M8 5v16M15 5v16" stroke="#eee"/></svg></button>
        <button class="tb" type="button" aria-label="Members"><svg viewBox="0 0 24 24"><rect x="1" y="11" width="22" height="11" fill="#fff" stroke="#888" stroke-width="2"/><path d="M2 15h20M2 18h20M8 12v10M15 12v10" stroke="#bbb"/><path d="M5 3l14 4" stroke="#999"/><circle cx="5" cy="3" r="2" fill="#aaa"/><circle cx="19" cy="7" r="2" fill="#aaa"/></svg></button>
        <button class="tb" type="button" aria-label="Add"><svg viewBox="0 0 24 24"><use href="#grid-g"/><path d="M12 5v14M5 12h14" stroke="#aaa" stroke-width="5"/></svg></button>
        <button class="tb" type="button" aria-label="Remove"><svg viewBox="0 0 24 24"><use href="#grid-g"/><path d="M7 7l10 10M17 7L7 17" stroke="#aaa" stroke-width="5"/></svg></button>
        <button class="tb" type="button" aria-label="Info"><svg viewBox="0 0 24 24"><use href="#grid-g"/><circle cx="12" cy="7" r="3" fill="#aaa"/><circle cx="12" cy="16" r="3" fill="#aaa"/></svg></button>
        <i class="sep"></i>
        <button class="tb" type="button" aria-label="Delete all"><svg viewBox="0 0 24 24"><use href="#grid-g"/><path d="M5 5l14 14M19 5L5 19" stroke="#777" stroke-width="4"/></svg></button>
        <i class="sep"></i>
        <button class="tb" type="button" aria-label="Copy row"><svg viewBox="0 0 24 24"><path d="M1 7h11v15H1z" fill="#777"/><path d="M2 1h10v5H2z" fill="#fff" stroke="#999"/><path d="M1 12h11M1 17h11" stroke="#eee"/><path d="M14 9q8 0 8 5t-7 5" fill="none" stroke="#888" stroke-width="2"/><path d="M18 14v8l-5-3z" fill="#888"/></svg></button>
        <button class="tb" type="button" aria-label="Delete row"><svg viewBox="0 0 24 24"><path d="M1 8h11v7H1z" fill="#777"/><path d="M1 2h10v5M1 21h10v-5" fill="none" stroke="#999"/><path d="M13 6l10 11M23 6L13 17" stroke="#888" stroke-width="2"/></svg></button>
        <button class="tb" type="button" aria-label="Insert row"><svg viewBox="0 0 24 24"><path d="M1 1.500h10v5H1M1 21.500h10v-5H1" fill="none" stroke="#888"/><path d="M1 11l7-5v3h5v4H8v3z" fill="#0e9a48"/><path d="M23 8.500H13v5h10" fill="none" stroke="#0e9a48"/></svg></button>
        <button class="tb" type="button" aria-label="Extract row"><svg viewBox="0 0 24 24"><path d="M1 1.500h10v5H1M1 21.500h10v-5H1" fill="none" stroke="#888"/><path d="M23 11l-7-5v3h-5v4h5v3z" fill="#f01010"/><path d="M1 8.500h10v5H1" fill="none" stroke="#f06060"/></svg></button>
        <i class="sep"></i>
        <button class="tb" type="button" aria-label="Header"><svg viewBox="0 0 24 24"><rect x="1" y="2" width="22" height="20" fill="#fafafa" stroke="#888" stroke-width="2"/><path d="M2 3h20v8H2z" fill="#ddd"/></svg></button>
        <i class="sep"></i>
        <button class="tb" type="button" aria-label="Parameters"><svg viewBox="0 0 24 24"><use href="#win" x="10" y="0" width="13" height="10"/><text x="0" y="21" font-family="Liberation Serif" font-size="13" font-weight="700" font-style="italic" fill="#333">ab=</text></svg></button>
        <button class="tb" type="button" aria-label="Formula"><svg viewBox="0 0 24 24"><text x="5" y="17" font-family="Liberation Serif" font-size="20" font-style="italic" fill="#555">fx</text></svg></button>
        <button class="tb" type="button" aria-label="Remove formula"><svg viewBox="0 0 24 24" class="gray"><text x="4" y="19" font-family="Liberation Serif" font-size="20" font-style="italic" fill="#555">fx</text><use href="#cross" x="11" y="0" width="13" height="13"/></svg></button>
        <button class="tb" type="button" aria-label="Show formula"><svg viewBox="0 0 24 24"><text x="4" y="19" font-family="Liberation Serif" font-size="20" font-style="italic" font-weight="700" fill="#111">fx</text><use href="#eye" x="11" y="0" width="13" height="10"/></svg></button>
        <span class="grow"></span>
        <button class="more" type="button">»</button>
        <button class="tb last" type="button" aria-label="Units"><svg><use href="#units"/></svg></button>
      </div>
      <div class="grid-area">
        <table class="grid">
          <colgroup><col class="c-no"><col class="c-name"><col class="c-type"><col class="c-nodes"><col></colgroup>
          <thead>
            <tr class="stripe"><th></th><th></th><th></th><th></th><th></th></tr>
            <tr class="group"><th></th><th></th><th></th><th class="geo" colspan="2">Geometry</th></tr>
            <tr class="heads"><th></th><th>Name</th><th>Roof Type</th><th>Roof Corner Nodes No.</th><th></th></tr>
          </thead>
          <tbody>
            <tr><th>1</th><td class="focus"></td><td></td><td></td><td class="ro"></td></tr>
            <tr><th>2</th><td></td><td></td><td></td><td class="ro"></td></tr>
          </tbody>
        </table>
        <div class="vbar"><svg viewBox="0 0 12 12"><path d="M1 9l5-5 5 5" fill="none" stroke="#555" stroke-width="2"/></svg><i></i><svg viewBox="0 0 12 12"><path d="M1 3l5 5 5-5" fill="none" stroke="#555" stroke-width="2"/></svg></div>
      </div>
      <div class="hbar"><svg viewBox="0 0 12 12"><path d="M8 1L3 6l5 5" fill="none" stroke="#555" stroke-width="2"/></svg><i></i><span class="grow"></span><svg viewBox="0 0 12 12"><path d="M4 1l5 5-5 5" fill="none" stroke="#555" stroke-width="2"/></svg></div>
      <div class="sheets">
        <div class="pager">
          <button type="button" aria-label="First"><svg viewBox="0 0 10 10"><path d="M1 1h2v8H1zM9 1v8L4 5z"/></svg></button>
          <button type="button" aria-label="Back"><svg viewBox="0 0 10 10"><path d="M8 1v8L2 5z"/></svg></button>
          <span>3 of 3</span>
          <button class="dim" type="button" aria-label="Forward"><svg viewBox="0 0 10 10"><path d="M2 1v8l6-4z"/></svg></button>
          <button class="dim" type="button" aria-label="Last"><svg viewBox="0 0 10 10"><path d="M7 1h2v8H7zM1 1v8l5-4z"/></svg></button>
        </div>
        <button class="sheet" type="button">Member Loads from Area Load</button><button class="sheet" type="button">Member Loads from Free Line Load</button><button class="sheet active" type="button">Snow Loads</button>
      </div>
    </section>
  </section>
</main>

<footer class="status">
  <span class="hint">Sets new snow load wizard via dialog box.</span>
  <button class="in" type="button">SNAP</button><button type="button">GRID</button><button class="in" type="button">LGRID</button><button class="in" type="button">OSNAP</button>
  <span class="cell w100"></span><span class="cell w130"></span><span class="cell w195">CS: Global XYZ</span><span class="cell w80">Plane: XZ</span><span class="cell w94"></span><span class="cell w94"></span><span class="cell w94"></span><span class="cell"></span>
  <svg class="size-grip" viewBox="0 0 12 12"><path d="M9 0h3v3H9zM9 4h3v3H9zM9 8h3v3H9zM5 4h3v3H5zM5 8h3v3H5zM1 8h3v3H1z" fill="#bbb"/></svg>
</footer>
</body>
</html>
```
FILE: styles.css
```css
* { box-sizing: border-box; }

body {
  margin: 0;
  min-height: 100vh;
  display: flex;
  flex-direction: column;
  border: 1px solid #777;
  background: #f7f7f7;
  color: #000;
  font: 12px/20px "Noto Sans", sans-serif;
}

button, select {
  font: inherit;
  color: inherit;
  border: 0;
  padding: 0;
  margin: 0;
  background: none;
}

.sprite { display: none; }
.grow { flex: 1; }
.red { color: #e01010; }
.gray { color: #888; }
.snow { color: #0e7fa8; }
.lilac { color: #7a90e0; }
.vals { font: 700 9px "Liberation Mono", monospace; fill: #777; }

/* title bar */
.titlebar { display: flex; align-items: center; height: 36px; background: #fff; padding-left: 8px; }
.app-icon { width: 22px; height: 22px; margin-right: 4px; }
.titlebar h1 { margin: 0; font-size: 14px; font-weight: 400; flex: 1; }
.win-btns { display: flex; }
.win-btns button { width: 58px; height: 36px; display: grid; place-items: center; }
.win-btns svg { width: 14px; height: 14px; }

/* menus */
.menubar { display: flex; align-items: center; height: 25px; gap: 17px; border-bottom: 1px solid #e4e4e4; }
.menubar .brand { width: 20px; height: 15px; margin-right: -10px; }

/* toolbars */
.toolbar { display: flex; align-items: center; height: 35px; padding-left: 4px; border-bottom: 1px solid #e0e0e0; }
.tb, .dd, .more, .step { flex: none; height: 28px; display: grid; place-items: center; }
.tb { width: 31px; }
.tb svg { width: 24px; height: 24px; }
.dd { width: 15px; }
.dd svg { width: 10px; height: 6px; }
.on { background: #c5e1f8; border: 1px solid #90c8f6; }
.more { width: 16px; font-size: 14px; line-height: 14px; color: #444; }
.grip { flex: none; width: 8px; height: 26px; background: radial-gradient(circle, #aaa 1px, transparent 1px) -2px 0 / 8px 5px; }
.sep, .sep-plain { flex: none; width: 8px; height: 26px; background: linear-gradient(#d6d6d6, #d6d6d6) 3px 0 / 1px 100% no-repeat; }
.sep-plain { width: 12px; }
.sep-grip { flex: none; width: 13px; height: 34px; padding: 4px 0; background: radial-gradient(circle, #aaa 1px, transparent 1px) 2px 0 / 10px 5px content-box; border-left: 1px solid #d6d6d6; }
.step { width: 20px; height: 24px; background: #e6e6f1; border-left: 1px solid #f7f7f7; }
.step svg { width: 6px; height: 10px; }
.step.dim { background: #d2d2d2; fill: #555; }

.combo { display: flex; flex: none; align-items: center; height: 24px; background: #e6e6f1; }
.combo select { flex: 1; min-width: 0; height: 24px; appearance: none; }
.chev { width: 12px; height: 12px; margin-right: 4px; color: #444; }
.swatch { width: 14px; height: 14px; margin-left: 5px; background: #ccffff; }
.combo-cs { width: 186px; }
.combo-cs select { margin-left: 6px; }
.combo-lc { width: 213px; }
.tag { width: 38px; height: 16px; margin: 0 5px 0 4px; background: #9bbb59; text-align: center; line-height: 18px; }
.lc { width: 39px; border-right: 1px solid #fff; }
.combo-lc select { margin-left: 7px; }
.combo-a { width: 146px; }
.combo-b { width: 158px; background: #e6e6e6; }
.combo-b .chev { color: #aaa; }

/* work area */
.work { flex: 1; display: flex; gap: 6px; }
.nav { position: relative; flex: none; width: 358px; display: flex; flex-direction: column; }
.dock-head { display: flex; align-items: center; height: 25px; gap: 14px; padding: 0 8px 0 7px; background: #d8e6f3; color: #404048; }
.dock-head h2 { margin: 0; flex: 1; font-size: 14px; font-weight: 700; }
.dock-head button, .dock-head svg { display: block; width: 12px; height: 12px; }
.tree-box { flex: 1; display: flex; flex-direction: column; margin: 1px 0 0 1px; border: 2px solid #c9c9d6; border-width: 1px 2px 2px; background: #fff; }
.tree { flex: 1; list-style: none; margin: 0; padding: 0; }
.tree li { display: flex; align-items: center; height: 23px; white-space: nowrap; }
.tw { flex: none; width: 12px; height: 12px; margin-right: 10px; }
.ic { flex: none; width: 20px; height: 20px; margin-right: 6px; }
.l0 { padding-left: 6px; }
.root { padding-left: 3px; }
.root .ic { height: 15px; }
.file { font-weight: 700; }
.l1 { padding-left: 31px; }
.l1.leaf { padding-left: 53px; }
.l2 { padding-left: 56px; }
.l2.leaf { padding-left: 78px; }
.narrow .ic { width: 17px; }
mark { background: #c1e89c; color: inherit; margin-left: -5px; padding: 1px 8px 2px 5px; }
.tree .selected { margin: 0 39px 0 76px; padding-left: 1px; background: #cce8ff; border: 1px dotted #000; }
.nav-tabs { display: flex; height: 28px; background: #f7f7f7; border-top: 1px solid #c9c9d6; }
.nav-tabs button { width: 38px; height: 27px; display: grid; place-items: center; background: #ececec; border: 1px solid #c9c9d6; border-width: 0 1px 1px 0; }
.nav-tabs .active { width: 39px; background: #fff; margin-top: -1px; height: 29px; }
.nav-tabs svg { width: 20px; height: 20px; }

.pointer { position: absolute; left: 2px; top: 507px; width: 78px; height: 52px; filter: drop-shadow(2px 2px 2px rgba(0, 0, 0, .4)); }

/* context menu */
.ctx { position: absolute; z-index: 2; left: 210px; top: 569px; width: 298px; padding: 2px 3px; background: #f6f6f6; border: 1px solid #c8c8c8; box-shadow: 3px 3px 2px rgba(0, 0, 0, .5); }
.ctx button { display: flex; align-items: center; width: 100%; height: 24px; padding: 0 14px 0 1px; text-align: left; white-space: nowrap; }
.ctx button svg { width: 20px; height: 20px; margin-right: 12px; }
.ctx span { flex: 1; }
.ctx kbd { font: inherit; width: 31px; }
.ctx .off { color: #828282; }
.ctx .hot { background: #91c9f7; }
.ctx hr { height: 1px; margin: 4px 0 4px 30px; border: 0; background: #d4d4d4; }
.mouse { position: absolute; left: 247px; top: 39px; width: 12px; height: 20px; }

/* model view and table dock */
.stage { flex: 1; min-width: 0; display: flex; flex-direction: column; background: #f7f7f7; }
.scene { flex: 1 1 0; min-height: 0; width: 100%; background: #fff; }
.dock { margin-top: 3px; }
.table-menu { gap: 16px; padding-left: 12px; }
.table-tools { height: 35px; border-bottom: 1px solid #c9c9d6; }
.table-tools .last { width: 34px; border-left: 1px solid #d6d6d6; height: 33px; }

.grid-area { display: flex; border-right: 1px solid #c9c9d6; }
.grid { flex: 1; border-collapse: separate; border-spacing: 0; table-layout: fixed; }
.grid th, .grid td { padding: 0; height: 20px; line-height: 19px; font-weight: 400; border: 0 solid #dcdcdc; border-width: 0 1px 1px 0; }
.grid th { background: #f0f0f0; text-align: center; font-size: 13px; }
.c-no { width: 74px; }
.c-name, .c-nodes { width: 250px; }
.c-type { width: 200px; }
.grid .stripe th { height: 13px; background: #e1e1e1; border-color: #f7f7f7; }
.grid .group th { border-color: #f0f0f0; }
.grid .group th:nth-child(3) { border-right-color: #d0d0d0; }
.grid .geo { padding-left: 13px; }
.grid .heads th { border-color: #c8c8c8; }
.grid tbody th { background: #e1e1e1; border-right: 0; font-size: 12px; }
.grid td { background: #fff; }
.grid .ro { background: #f9faf3; border-right: 0; }
.grid .focus { outline: 1px dotted #000; outline-offset: -2px; }
.vbar { width: 21px; display: flex; flex-direction: column; align-items: center; background: #f0f0f0; padding: 5px 0; }
.vbar svg, .hbar svg { width: 12px; height: 12px; }
.vbar i { width: 19px; height: 22px; margin: 4px 0 auto; background: #cdcdcd; }
.hbar { display: flex; align-items: center; height: 21px; padding: 0 26px 0 4px; background: #f0f0f0; border-bottom: 1px solid #c9c9d6; }
.hbar i { width: 64%; height: 19px; margin-left: 5px; background: #cdcdcd; }

.sheets { display: flex; height: 25px; font-size: 13px; }
.pager { display: flex; align-items: center; gap: 11px; width: 151px; padding-left: 5px; font-size: 12px; }
.pager span { margin: 0 12px 0 11px; white-space: nowrap; }
.pager button, .pager svg { display: block; width: 10px; height: 10px; }
.pager .dim { fill: #888; }
.sheet { height: 24px; padding: 0 5px; white-space: nowrap; background: #ececec; border: 1px solid #c9c9d6; border-top: 0; }
.sheet.active { background: #fff; height: 25px; }

/* status bar */
.status { display: flex; align-items: center; height: 29px; padding: 4px 2px 0 6px; }
.hint { width: 398px; font-size: 13px; white-space: nowrap; }
.status button { height: 24px; padding: 0 4px; margin-right: 3px; border: 1px solid transparent; }
.status .in { background: #ececec; border-color: #c0c0c0 #fff #fff #c0c0c0; }
.cell { height: 24px; padding-left: 4px; border-left: 1px solid #d0d0d0; font-size: 13px; line-height: 24px; white-space: nowrap; }
.w80 { width: 80px; }
.w94 { width: 94px; }
.w100 { width: 100px; }
.w130 { width: 131px; }
.w195 { width: 194px; }
.size-grip { width: 12px; height: 12px; margin: 10px 0 0 auto; }
```
